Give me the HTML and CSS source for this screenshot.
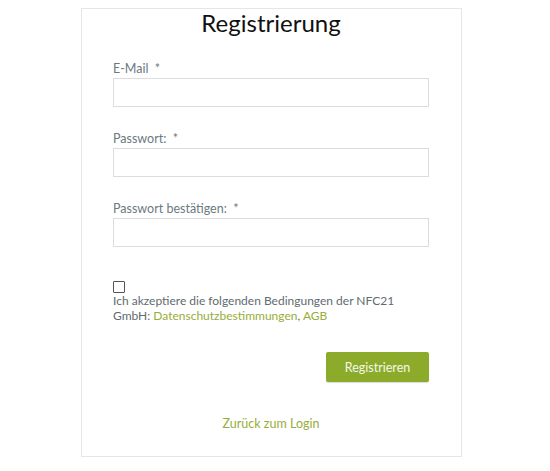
FILE: index.html
```html
<!DOCTYPE html>
<html lang="de">
<head>
<meta charset="utf-8">
<link rel="stylesheet" href="styles.css">
</head>
<body>
<div class="card">
  <h1 class="title">Registrierung</h1>
  <form class="form">
    <div class="field">
      <label class="label">E-Mail&nbsp; *</label>
      <input class="input" type="email">
    </div>
    <div class="field">
      <label class="label">Passwort:&nbsp; *</label>
      <input class="input" type="password">
    </div>
    <div class="field">
      <label class="label">Passwort bestätigen:&nbsp; *</label>
      <input class="input" type="password">
    </div>
    <div class="terms">
      <span class="check"></span>
      <p class="terms-text"><span>Ich akzeptiere die folgenden Bedingungen der NFC21</span><br><span>GmbH: </span><a class="link" href="#">Datenschutzbestimmungen</a><span>, </span><a class="link" href="#">AGB</a></p>
    </div>
    <div class="actions">
      <button class="btn" type="button">Registrieren</button>
    </div>
  </form>
  <div class="back"><a class="link" href="#">Zurück zum Login</a></div>
</div>
</body>
</html>
```
FILE: styles.css
```css
html, body { margin: 0; padding: 0; background: #fff; }
body { font-family: Lato, "Open Sans", sans-serif; color: #5f6b70; }
.card {
  box-sizing: border-box;
  width: 381px;
  height: 449px;
  margin: 8px 0 0 81px;
  border: 1px solid #e6e6e6;
  padding: 0 32px 0 31px;
}
.title {
  margin: 0;
  text-align: center;
  font-weight: 400;
  font-size: 24px;
  line-height: 28px;
  color: #111;
}
.form { margin-top: 24px; }
.field { margin-bottom: 24px; }
.label { display: block; font-size: 12.5px; line-height: 16px; color: #6a7a80; margin-bottom: 1px; }
.input {
  display: block;
  box-sizing: border-box;
  width: 100%;
  height: 29px;
  border: 1px solid #dcdcdc;
  margin: 0;
  padding: 0 6px;
  background: #fff;
}
.terms { margin-top: 34px; }
.check {
  display: block;
  width: 10px; height: 10px;
  border: 1px solid #555;
  border-radius: 1px;
}
.terms-text { margin: 0; font-size: 12px; line-height: 15px; color: #5f6b70; }
.link { color: #97ad3b; text-decoration: none; }
.actions { display: flex; justify-content: flex-end; margin-top: 29px; }
.btn {
  width: 103px; height: 30px;
  background: #8dab2b;
  border: 0; border-radius: 2px;
  color: #f4f8e8;
  font-family: inherit; font-size: 12.5px;
  box-shadow: 0 1px 1px rgba(0,0,0,0.15);
}
.back { text-align: center; font-size: 12.5px; margin-top: 34px; }
```
